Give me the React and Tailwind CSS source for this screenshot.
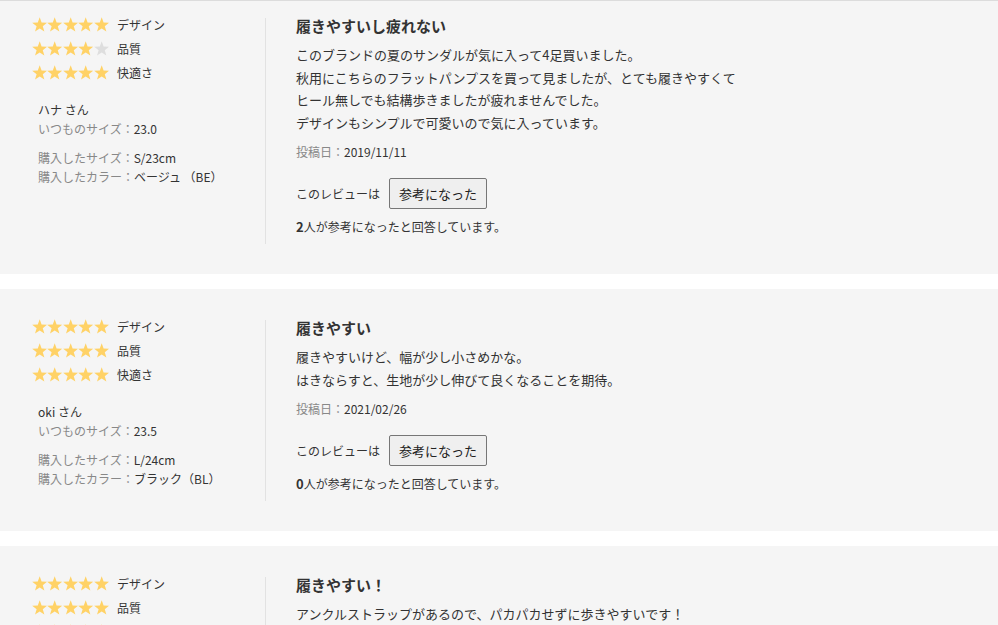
import React from "react";

const reviews = [
  {
    ratings: [
      ["デザイン", 5],
      ["品質", 4],
      ["快適さ", 5],
    ],
    name: "ハナ さん",
    usual: "23.0",
    size: "S/23cm",
    color: "ベージュ （BE）",
    title: "履きやすいし疲れない",
    body: [
      "このブランドの夏のサンダルが気に入って4足買いました。",
      "秋用にこちらのフラットパンプスを買って見ましたが、とても履きやすくて",
      "ヒール無しでも結構歩きましたが疲れませんでした。",
      "デザインもシンプルで可愛いので気に入っています。",
    ],
    date: "2019/11/11",
    helpful: 2,
  },
  {
    ratings: [
      ["デザイン", 5],
      ["品質", 5],
      ["快適さ", 5],
    ],
    name: "oki さん",
    usual: "23.5",
    size: "L/24cm",
    color: "ブラック（BL）",
    title: "履きやすい",
    body: [
      "履きやすいけど、幅が少し小さめかな。",
      "はきならすと、生地が少し伸びて良くなることを期待。",
    ],
    date: "2021/02/26",
    helpful: 0,
  },
  {
    ratings: [
      ["デザイン", 5],
      ["品質", 5],
      ["快適さ", 5],
    ],
    name: "みー さん",
    usual: "24.0",
    size: "L/24cm",
    color: "ブラック（BL）",
    title: "履きやすい！",
    body: ["アンクルストラップがあるので、パカパカせずに歩きやすいです！"],
    date: "2021/03/14",
    helpful: 1,
  },
];

const Star = ({ on }) => (
  <svg viewBox="0 0 15 15" className="w-[15.4px] h-[15.4px] shrink-0">
    <polygon
      points="7.5,0.2 9.35,5.35 14.8,5.5 10.5,8.9 12.05,14.2 7.5,11.1 2.95,14.2 4.5,8.9 0.2,5.5 5.65,5.35"
      fill={on ? "#ffd266" : "#dedede"}
    />
  </svg>
);

const Review = ({ r, first }) => (
  <div
    className={
      "bg-[#f5f5f5] flex pb-[30px] " + (first ? "pt-[12px]" : "pt-[26px]")
    }
  >
    {/* left: ratings + reviewer */}
    <div className="w-[265px] shrink-0 pl-[32px]">
      {r.ratings.map(([label, n]) => (
        <div key={label} className="flex items-center gap-[8px] h-[24px]">
          <div className="flex">
            {[1, 2, 3, 4, 5].map((i) => (
              <Star key={i} on={i <= n} />
            ))}
          </div>
          <span className="text-[12px] text-[#333]">{label}</span>
        </div>
      ))}

      <div className="pl-[6px] mt-[15px] text-[12px] leading-[19px]">
        <p className="text-[#333]">{r.name}</p>
        <p className="text-[#888]">
          いつものサイズ：<span className="text-[#333]">{r.usual}</span>
        </p>
        <p className="text-[#888] mt-[10px]">
          購入したサイズ：<span className="text-[#333]">{r.size}</span>
        </p>
        <p className="text-[#888]">
          購入したカラー：<span className="text-[#333]">{r.color}</span>
        </p>
      </div>
    </div>

    {/* right: review body */}
    <div className="mt-[5px] border-l border-[#e2e2e2] pl-[30px] pb-[8px] text-[#333]">
      <h3 className="text-[15px] leading-[16px] font-bold">{r.title}</h3>
      <div className="mt-[10px] text-[13px] leading-[22.5px]">
        {r.body.map((line) => (
          <p key={line}>{line}</p>
        ))}
      </div>
      <p className="mt-[9px] text-[12px] leading-[18px] text-[#888]">
        投稿日：<span className="text-[#333]">{r.date}</span>
      </p>
      <div className="mt-[17px] flex items-center gap-[9px] text-[12px]">
        <span>このレビューは</span>
        <button className="h-[31px] px-[9px] text-[13px] text-[#222] bg-[#efefef] border border-[#767676] rounded-[2px]">
          参考になった
        </button>
      </div>
      <p className="mt-[9px] text-[12px] leading-[18px]">
        <span className="font-bold text-[13px]">{r.helpful}</span>
        人が参考になったと回答しています。
      </p>
    </div>
  </div>
);

export default function App() {
  return (
    <div
      className="bg-white min-h-screen"
      style={{ fontFamily: '"Noto Sans CJK JP", "Noto Sans", sans-serif' }}
    >
      <div className="h-px bg-[#dcdcdc]" />
      <div className="flex flex-col gap-[15px]">
        {reviews.map((r, i) => (
          <Review key={i} r={r} first={i === 0} />
        ))}
      </div>
    </div>
  );
}
